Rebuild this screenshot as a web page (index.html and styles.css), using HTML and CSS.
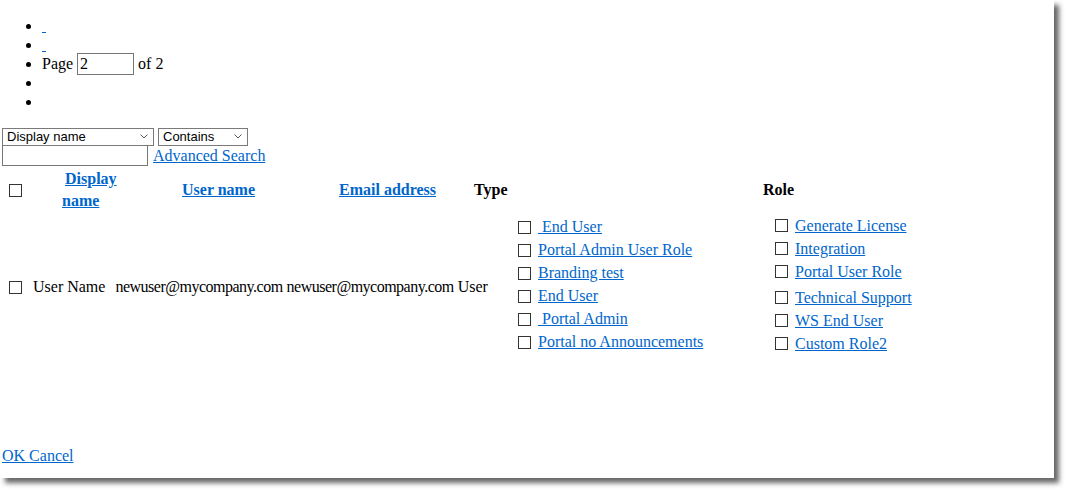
FILE: index.html
```html
<!DOCTYPE html>
<html>
<head>
<meta charset="utf-8">
<title>Users</title>
<link rel="stylesheet" href="styles.css">
</head>
<body>
<div class="sheet">
  <ul class="pager">
    <li><a href="#">&nbsp;</a></li>
    <li><a href="#">&nbsp;</a></li>
    <li>Page <input class="page-input" type="text" value="2"> of 2</li>
    <li></li>
    <li></li>
  </ul>

  <div class="filters">
    <div class="filter-row">
      <span class="sel sel-field">
        <select><option>Display name</option></select>
        <svg class="chev" width="8" height="5" viewBox="0 0 8 5"><path d="M0.5 0.5 L4 4 L7.5 0.5" fill="none" stroke="#555" stroke-width="1"/></svg>
      </span>
      <span class="sel sel-op">
        <select><option>Contains</option></select>
        <svg class="chev" width="8" height="5" viewBox="0 0 8 5"><path d="M0.5 0.5 L4 4 L7.5 0.5" fill="none" stroke="#555" stroke-width="1"/></svg>
      </span>
    </div>
    <div class="filter-row search-row">
      <input class="search-input" type="text">
      <a href="#" class="adv">Advanced Search</a>
    </div>
  </div>

  <div class="head-row">
    <div class="c-cb"><input type="checkbox" class="cb"></div>
    <div class="c-disp"><a href="#" class="th-link disp-link">Display name</a></div>
    <div class="c-user"><a href="#" class="th-link">User name</a></div>
    <div class="c-email"><a href="#" class="th-link">Email address</a></div>
    <div class="c-type"><span class="th-text">Type</span></div>
    <div class="c-role"><span class="th-text">Role</span></div>
  </div>

  <div class="data-row">
    <div class="d-main">
      <input type="checkbox" class="cb d-cb">
      <span class="d-disp">User Name</span>
      <span class="d-user">newuser@mycompany.com</span>
      <span class="d-email">newuser@mycompany.com</span>
      <span class="d-type">User</span>
    </div>
    <div class="d-types">
      <div class="opt"><input type="checkbox" class="cb"><a href="#">&nbsp;End User</a></div>
      <div class="opt"><input type="checkbox" class="cb"><a href="#">Portal Admin User Role</a></div>
      <div class="opt"><input type="checkbox" class="cb"><a href="#">Branding test</a></div>
      <div class="opt"><input type="checkbox" class="cb"><a href="#">End User</a></div>
      <div class="opt"><input type="checkbox" class="cb"><a href="#">&nbsp;Portal Admin</a></div>
      <div class="opt"><input type="checkbox" class="cb"><a href="#">Portal no Announcements</a></div>
    </div>
    <div class="d-roles">
      <div class="opt"><input type="checkbox" class="cb"><a href="#">Generate License</a></div>
      <div class="opt"><input type="checkbox" class="cb"><a href="#">Integration</a></div>
      <div class="opt"><input type="checkbox" class="cb"><a href="#">Portal User Role</a></div>
      <div class="opt opt-gap"><input type="checkbox" class="cb"><a href="#">Technical Support</a></div>
      <div class="opt"><input type="checkbox" class="cb"><a href="#">WS End User</a></div>
      <div class="opt"><input type="checkbox" class="cb"><a href="#">Custom Role2</a></div>
    </div>
  </div>

  <div class="footer"><a href="#">OK </a><a href="#">Cancel</a></div>
</div>
</body>
</html>
```

FILE: styles.css
```css
html, body {
  margin: 0;
  padding: 0;
  background: #ffffff;
  overflow: hidden;
}

body {
  width: 1069px;
  height: 494px;
  font-family: "Liberation Serif", "Times New Roman", serif;
  font-size: 16px;
  color: #000;
}

.sheet {
  width: 1054px;
  height: 478px;
  box-sizing: border-box;
  padding: 0 2px;
  background: #fff;
  box-shadow: 5px 5px 5px rgba(0, 0, 0, 0.6);
  overflow: hidden;
}

a {
  color: #0066cc;
  text-decoration: underline;
}

.pager {
  margin: 16px 0;
  padding-left: 40px;
  list-style: disc;
}

.pager li {
  height: 19px;
  line-height: 19px;
}

.page-input {
  width: 57px;
  height: 22px;
  box-sizing: border-box;
  margin: 0;
  padding: 0 2px;
  border: 1px solid #767676;
  font-family: "Liberation Serif", "Times New Roman", serif;
  font-size: 16px;
  vertical-align: middle;
  position: relative;
  top: -1px;
}

.filters {
  display: flex;
  flex-direction: column;
}

.filter-row {
  display: flex;
  align-items: center;
  gap: 4px;
  height: 18px;
}

.search-row {
  height: 21px;
  gap: 5px;
}

.sel {
  position: relative;
  display: inline-block;
  height: 18px;
}

.sel select {
  appearance: none;
  -webkit-appearance: none;
  height: 18px;
  box-sizing: border-box;
  margin: 0;
  padding: 0 0 0 4px;
  border: 1px solid #7a7a7a;
  border-radius: 0;
  background: #fff;
  font-family: "Liberation Sans", Arial, sans-serif;
  font-size: 13px;
  color: #000;
  line-height: 16px;
}

.sel-field select { width: 152px; }
.sel-op select { width: 90px; }

.chev {
  position: absolute;
  right: 6px;
  top: 7px;
  pointer-events: none;
}

.search-input {
  width: 146px;
  height: 21px;
  box-sizing: border-box;
  margin: 0;
  border: 1px solid #767676;
  padding: 0 2px;
  font-size: 13px;
}

.adv {
  line-height: 18px;
}

.cb {
  appearance: none;
  -webkit-appearance: none;
  width: 13px;
  height: 13px;
  box-sizing: border-box;
  margin: 0;
  border: 1px solid #333;
  border-radius: 0;
  background: #fff;
  flex: none;
}

.head-row {
  display: flex;
  align-items: center;
  height: 44px;
  margin-top: 2px;
  font-weight: bold;
}

.c-cb { width: 60px; padding-left: 7px; box-sizing: border-box; display: flex; align-items: center; }
.c-disp { width: 120px; line-height: 22px; }
.disp-link { display: inline-block; width: 58px; text-indent: 3px; }
.c-user { width: 157px; }
.c-email { width: 135px; }
.c-type { width: 289px; }
.c-role { flex: 1; }

.th-text { color: #000; }

.data-row {
  display: flex;
  align-items: center;
  margin-top: 1px;
}

.d-main {
  width: 516px;
  flex: none;
  display: flex;
  align-items: center;
  white-space: nowrap;
  padding-top: 7px;
  box-sizing: border-box;
}

.d-cb { margin-left: 7px; }
.d-disp { margin-left: 11px; }
.d-user { margin-left: 10px; letter-spacing: -0.5px; }
.d-email { margin-left: 4px; letter-spacing: -0.5px; }
.d-type { margin-left: 4px; }

.d-types { width: 257px; flex: none; display: flex; flex-direction: column; }
.d-roles { flex: 1; display: flex; flex-direction: column; }

.opt {
  display: flex;
  align-items: center;
  height: 23px;
  gap: 7px;
  white-space: nowrap;
}

.d-types .opt { position: relative; top: 1px; }
.d-roles .opt { position: relative; top: 1px; }

.opt-gap { margin-top: 3px; }

.footer {
  margin-top: 93px;
  line-height: 18px;
}
```
